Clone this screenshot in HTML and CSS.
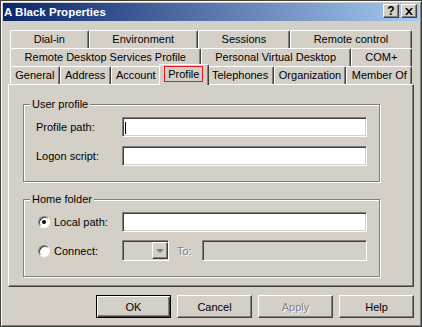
FILE: index.html
```html
<!DOCTYPE html>
<html lang="en">
<head>
    <meta charset="UTF-8">
    <title>A Black Properties</title>
    <link rel="stylesheet" href="styles.css">
</head>
<body>

    <div class="window">
        <div class="titlebar">
            <span class="title">A Black Properties</span>
            <span class="tbtn">?</span>
            <span class="tbtn">
                <svg width="8" height="7" viewBox="0 0 8 7"><path d="M0 0h2l2 2.2L6 0h2L5 3.5 8 7H6L4 4.8 2 7H0l3-3.5z" fill="#000"/></svg>
            </span>
        </div>

        <div class="content">
            <!-- tab strip, back row first -->
            <div class="tabs">
                <div class="tabrow">
                    <div class="tab">Dial-in</div>
                    <div class="tab">Environment</div>
                    <div class="tab">Sessions</div>
                    <div class="tab">Remote control</div>
                </div>
                <div class="tabrow">
                    <div class="tab">Remote Desktop Services Profile</div>
                    <div class="tab">Personal Virtual Desktop</div>
                    <div class="tab">COM+</div>
                </div>
                <div class="tabrow front">
                    <div class="tab">General</div>
                    <div class="tab">Address</div>
                    <div class="tab">Account</div>
                    <div class="tab selected"><span class="mark">Profile</span></div>
                    <div class="tab">Telephones</div>
                    <div class="tab">Organization</div>
                    <div class="tab">Member Of</div>
                </div>
            </div>

            <div class="panel">
                <div class="group">
                    <div class="legend">User profile</div>
                    <div class="field">
                        <label>Profile path:</label>
                        <div class="textbox"><span class="caret"></span></div>
                    </div>
                    <div class="field">
                        <label>Logon script:</label>
                        <div class="textbox"></div>
                    </div>
                </div>

                <div class="group home">
                    <div class="legend">Home folder</div>
                    <div class="field">
                        <label><span class="radio checked"></span>Local path:</label>
                        <div class="textbox"></div>
                    </div>
                    <div class="field connect">
                        <label><span class="radio"></span>Connect:</label>
                        <div class="combo"><span class="drop"><span class="arrow"></span></span></div>
                        <span class="to">To:</span>
                        <div class="textbox disabled"></div>
                    </div>
                </div>
            </div>

            <div class="buttons">
                <button class="btn default">OK</button>
                <button class="btn">Cancel</button>
                <button class="btn disabled">Apply</button>
                <button class="btn">Help</button>
            </div>
        </div>
    </div>

</body>
</html>
```

FILE: styles.css
```css
body {
    margin: 0;
    font-family: "Liberation Sans", Arial, sans-serif;
    font-size: 11px;
    color: #000;
    background: #d4d0c8;
}
.window {
    width: 422px;
    height: 327px;
    box-sizing: border-box;
    border: 1px solid #404040;
    box-shadow: inset 1px 1px #fff, inset -1px -1px #808080;
    padding: 2px;
    background: #d4d0c8;
}
.titlebar {
    display: flex;
    align-items: flex-start;
    height: 18px;
    background: linear-gradient(to right, #0a246a, #a6caf0);
    color: #fff;
    padding-right: 2px;
}
.title {
    flex: 1;
    padding-left: 1px;
    line-height: 18px;
    font-weight: bold;
    font-size: 11.5px;
}
.tbtn {
    width: 16px;
    height: 14px;
    box-sizing: border-box;
    margin-top: 1px;
    margin-left: 2px;
    display: flex;
    align-items: center;
    justify-content: center;
    background: #d4d0c8;
    border: 1px solid;
    border-color: #fff #404040 #404040 #fff;
    box-shadow: inset -1px -1px #808080;
    color: #000;
    font-weight: bold;
    font-size: 12px;
}
.content {
    padding: 9px 5px 0 5px;
}

/* tabs */
.tabrow {
    display: flex;
    margin: 0 2px;
    height: 18px;
}
.tab {
    flex: 1 1 auto;
    box-sizing: border-box;
    height: 18px;
    padding: 0 5px;
    border-top: 1px solid #fff;
    border-left: 1px solid #fff;
    border-right: 1px solid #404040;
    box-shadow: inset -1px 0 #808080;
    border-radius: 2px 2px 0 0;
    text-align: center;
    line-height: 16px;
    white-space: nowrap;
    background: #d4d0c8;
}
.front .tab {
    padding: 0 2px;
}
.tab.selected {
    position: relative;
    z-index: 1;
    height: 21px;
    margin: -2px -2px -1px;
    padding-top: 1px;
}
.mark {
    display: inline-block;
    border: 1px solid #e8141c;
    padding: 0 3px;
    line-height: 14px;
}

/* page */
.panel {
    height: 203px;
    box-sizing: border-box;
    border: 1px solid;
    border-color: #fff #404040 #404040 #fff;
    box-shadow: inset -1px -1px #808080;
    padding-left: 14px;
    padding-top: 19px;
}
.group {
    width: 357px;
    height: 78px;
    box-sizing: border-box;
    border: 1px solid #808080;
    box-shadow: inset 1px 1px #fff, 1px 1px #fff;
    padding-left: 12px;
}
.group.home {
    margin-top: 17px;
}
.legend {
    width: fit-content;
    margin: -7px 0 0 -6px;
    padding: 0 2px;
    line-height: 13px;
    background: #d4d0c8;
}
.field {
    display: flex;
    align-items: center;
    height: 20px;
    margin-top: 6px;
}
.field + .field {
    margin-top: 9px;
}
.home .field + .field {
    margin-top: 8px;
}
.field label {
    width: 86px;
    flex: none;
    display: flex;
    align-items: center;
}
.textbox {
    width: 245px;
    height: 20px;
    box-sizing: border-box;
    background: #fff;
    border: 1px solid;
    border-color: #808080 #fff #fff #808080;
    box-shadow: inset 1px 1px #404040, inset -1px -1px #d4d0c8;
}
.caret {
    display: block;
    width: 1px;
    height: 12px;
    margin: 4px 0 0 2px;
    background: #000;
}
.radio {
    width: 12px;
    height: 12px;
    box-sizing: border-box;
    margin: 0 4px 0 2px;
    border-radius: 50%;
    background: #fff;
    border: 1px solid;
    border-color: #808080 #fff #fff #808080;
    box-shadow: inset 1px 1px #404040;
    display: flex;
    align-items: center;
    justify-content: center;
}
.radio.checked::after {
    content: "";
    width: 4px;
    height: 4px;
    border-radius: 50%;
    background: #000;
}
.field.connect {
    height: 21px;
}
.combo {
    width: 47px;
    height: 21px;
    box-sizing: border-box;
    background: #d4d0c8;
    border: 1px solid;
    border-color: #808080 #fff #fff #808080;
    box-shadow: inset 1px 1px #404040;
    display: flex;
    justify-content: flex-end;
    padding: 1px 0 0;
}
.drop {
    width: 16px;
    height: 17px;
    box-sizing: border-box;
    border: 1px solid;
    border-color: #fff #404040 #404040 #fff;
    box-shadow: inset -1px -1px #808080;
    display: flex;
    align-items: center;
    justify-content: center;
}
.arrow {
    width: 0;
    height: 0;
    border-left: 4px solid transparent;
    border-right: 4px solid transparent;
    border-top: 4px solid #808080;
}
.to {
    width: 25px;
    margin-left: 8px;
    color: #808080;
    text-shadow: 1px 1px #fff;
}
.textbox.disabled {
    width: 165px;
    height: 21px;
    background: #d4d0c8;
}

/* dialog buttons */
.buttons {
    display: flex;
    justify-content: flex-end;
    gap: 6px;
    margin-top: 8px;
}
.btn {
    width: 75px;
    height: 23px;
    box-sizing: border-box;
    padding: 0;
    font-family: inherit;
    font-size: 11px;
    color: #000;
    background: #d4d0c8;
    border: 1px solid;
    border-color: #fff #404040 #404040 #fff;
    box-shadow: inset -1px -1px #808080;
}
.btn.default {
    border-color: #000;
    box-shadow: inset 1px 1px #fff, inset -1px -1px #404040, inset -2px -2px #808080;
}
.btn.disabled {
    color: #808080;
    text-shadow: 1px 1px #fff;
}
```
